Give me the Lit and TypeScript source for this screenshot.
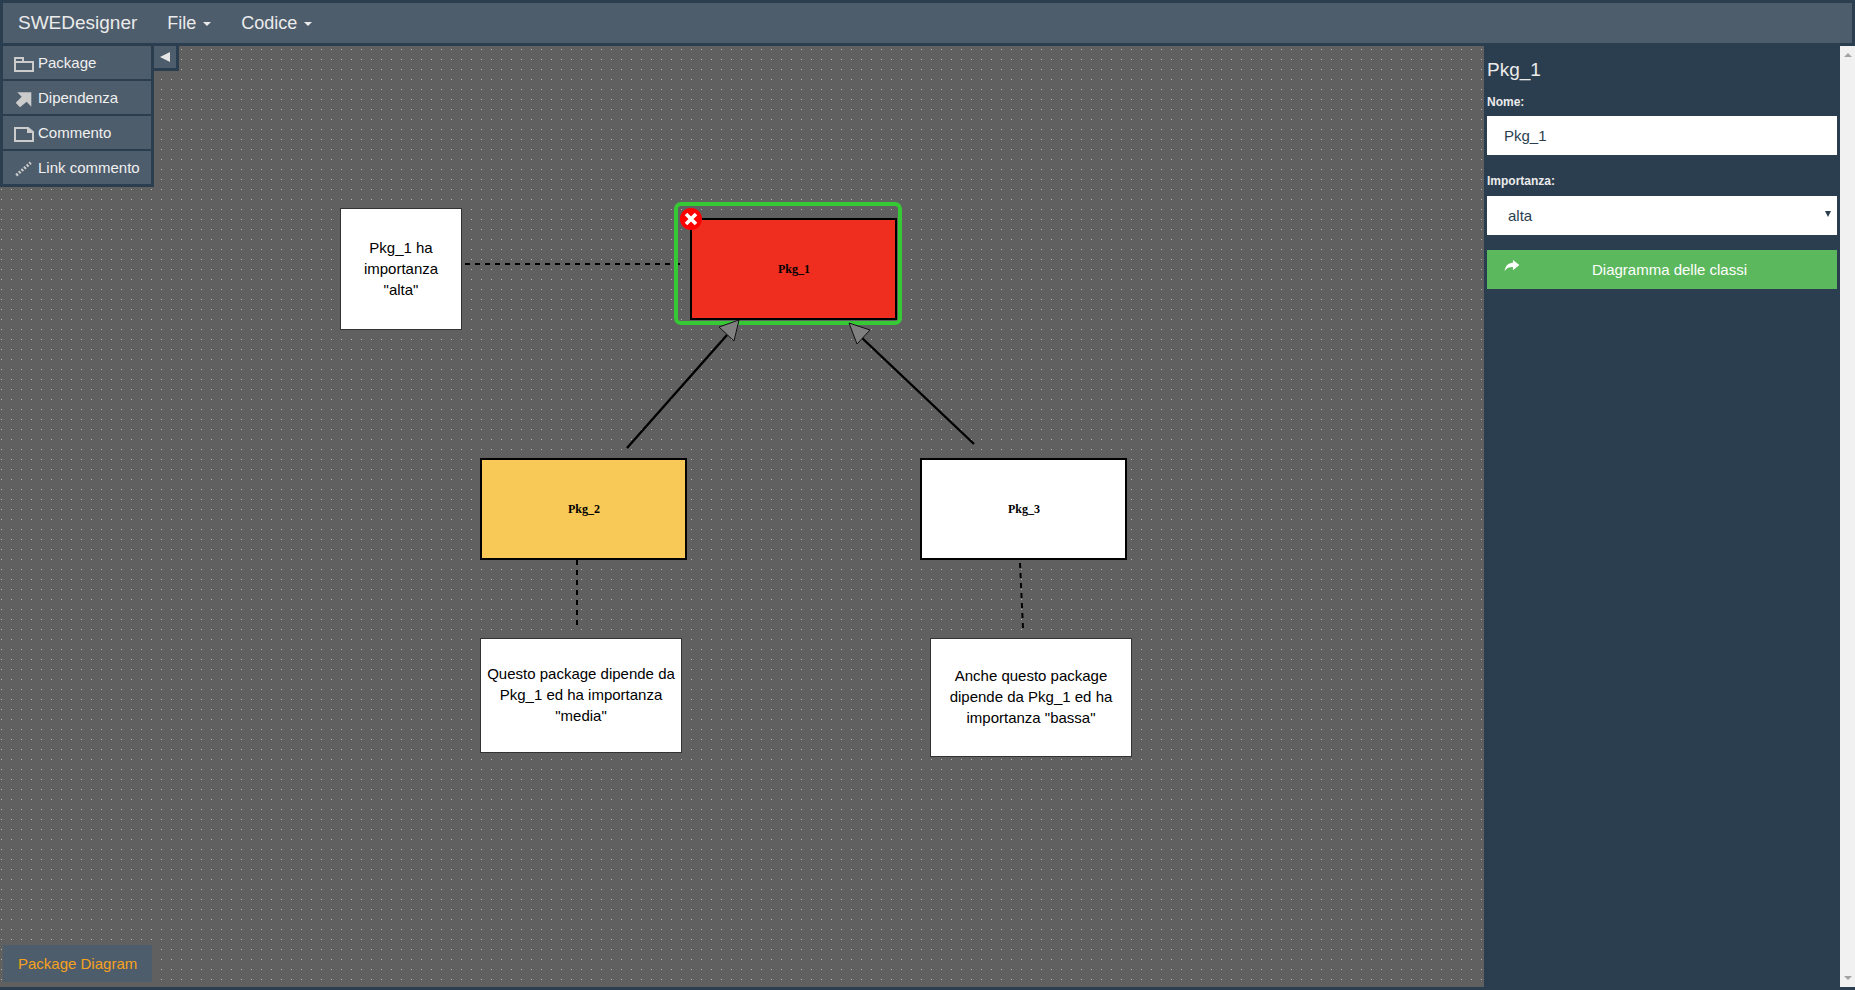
import { LitElement, css, html, svg } from "lit";
import { customElement } from "lit/decorators.js";

interface Pkg { name: string; x: number; y: number; fill: string; }
interface Note { lines: string[]; x: number; y: number; w: number; h: number; }

// canvas starts at y=46, coordinates below are relative to the page
const TOP = 46;

const PACKAGES: Pkg[] = [
  { name: "Pkg_1", x: 691, y: 219, fill: "#ef2e20" },
  { name: "Pkg_2", x: 481, y: 459, fill: "#f8c957" },
  { name: "Pkg_3", x: 921, y: 459, fill: "#ffffff" },
];

const NOTES: Note[] = [
  { lines: ["Pkg_1 ha", "importanza", '"alta"'], x: 340, y: 208, w: 122, h: 122 },
  { lines: ["Questo package dipende da", "Pkg_1 ed ha importanza", '"media"'], x: 480, y: 638, w: 202, h: 115 },
  { lines: ["Anche questo package", "dipende da Pkg_1 ed ha", 'importanza "bassa"'], x: 930, y: 638, w: 202, h: 119 },
];

@customElement("app-root")
export class AppRoot extends LitElement {
  static styles = css`
    :host {
      display: flex;
      flex-direction: column;
      height: 990px;
      overflow: hidden;
      background: #2b3e50;
      font-family: "Liberation Sans", Arial, sans-serif;
      font-size: 15px;
      color: #ebebeb;
    }

    .navbar {
      display: flex;
      align-items: center;
      height: 40px;
      margin: 3px;
      padding-left: 15px;
      background: #4e5d6c;
      flex: none;
    }

    .brand { font-size: 19px; margin-right: 30px; }
    .menu { font-size: 18px; margin-right: 30px; display: flex; align-items: center; }
    .caret {
      display: inline-block;
      margin-left: 7px;
      margin-top: 2px;
      border-top: 4px solid #ebebeb;
      border-left: 4px solid transparent;
      border-right: 4px solid transparent;
    }

    .main { display: flex; height: 941px; flex: none; }

    .canvas {
      position: relative;
      flex: 1;
      background-color: #606060;
      background-image: radial-gradient(circle at 1.5px 3.5px, #b4b4b4 0.7px, transparent 0.7px);
      background-size: 10px 10px;
    }

    .diagram { position: absolute; inset: 0; }

    .tools {
      position: absolute;
      left: 0;
      top: 0;
      width: 154px;
      box-sizing: border-box;
      padding: 0 3px 3px;
      background: #2b3e50;
      display: flex;
      flex-direction: column;
      gap: 2px;
    }

    .tool {
      display: flex;
      align-items: center;
      height: 33px;
      background: #4e5d6c;
      padding-left: 9px;
      gap: 1px;
      color: #f0f0f0;
    }

    .tool svg { width: 25px; height: 25px; flex: none; }

    .toggle {
      position: absolute;
      left: 154px;
      top: 0;
      width: 22px;
      height: 22px;
      background: #4e5d6c;
      border-right: 3px solid #2b3e50;
      border-bottom: 3px solid #2b3e50;
      display: flex;
      align-items: center;
      justify-content: center;
    }

    .toggle i {
      border-right: 10px solid #e6e6e6;
      border-top: 5.5px solid transparent;
      border-bottom: 5.5px solid transparent;
    }

    .tab {
      position: absolute;
      left: 3px;
      bottom: 5px;
      width: 149px;
      height: 37px;
      box-sizing: border-box;
      padding-left: 15px;
      display: flex;
      align-items: center;
      background: #4e5d6c;
      color: #f6a21c;
    }

    .note {
      position: absolute;
      box-sizing: border-box;
      padding-bottom: 2px;
      background: #fff;
      border: 1px solid #333;
      display: flex;
      flex-direction: column;
      align-items: center;
      justify-content: center;
      color: #000;
      line-height: 21px;
      text-align: center;
      white-space: nowrap;
    }

    .side {
      width: 356px;
      flex: none;
      box-sizing: border-box;
      padding: 0 3px;
    }

    h4 { margin: 13px 0 0; font-size: 19px; font-weight: 400; line-height: 21px; }
    label { display: block; font-size: 12px; font-weight: 700; margin: 15px 0 6px; line-height: 15px; }
    label.second { margin: 19px 0 7px; }

    input, .select select {
      display: block;
      box-sizing: border-box;
      width: 100%;
      height: 39px;
      border: 0;
      border-radius: 0;
      background: #fff;
      color: #2b3e50;
      font: 15px "Liberation Sans", Arial, sans-serif;
      padding: 0 17px;
      outline: none;
    }

    .select { position: relative; }
    .select select { appearance: none; padding-left: 21px; }
    .select::after {
      content: "";
      position: absolute;
      right: 6px;
      top: 15px;
      border-top: 6px solid #2b3e50;
      border-left: 3px solid transparent;
      border-right: 3px solid transparent;
    }

    .go {
      position: relative;
      margin-top: 15px;
      height: 39px;
      padding-left: 15px;
      background: #5cb85c;
      color: #fff;
      display: flex;
      align-items: center;
      justify-content: center;
    }

    .go svg { position: absolute; left: 17px; top: 10px; width: 16px; height: 12px; }

    .scroll {
      width: 15px;
      flex: none;
      background: #f1f1f1;
      display: flex;
      flex-direction: column;
      justify-content: space-between;
      align-items: center;
      padding: 7px 0;
      box-sizing: border-box;
    }

    .up { border-bottom: 4px solid #a3a3a3; border-left: 4px solid transparent; border-right: 4px solid transparent; }
    .down { border-top: 4px solid #a3a3a3; border-left: 4px solid transparent; border-right: 4px solid transparent; }

    text.pkg { font: 700 12px "Liberation Serif", "Times New Roman", serif; text-anchor: middle; fill: #000; }
  `;

  private renderDiagram() {
    return svg`
      <svg class="diagram" width="1484" height="941" viewBox="0 ${TOP} 1484 941">
        <g stroke="#000" stroke-width="2" fill="none" stroke-dasharray="5 5">
          <line x1="465" y1="264" x2="680" y2="264" />
          <line x1="577" y1="560" x2="577" y2="625" />
          <line x1="1020" y1="563" x2="1023" y2="628" />
        </g>
        <g stroke="#000" stroke-width="2.400">
          <line x1="627" y1="448" x2="727" y2="335" />
          <line x1="974" y1="444" x2="861" y2="337" />
        </g>
        <rect x="676" y="204" width="224" height="119" rx="5" fill="none" stroke="#35c935" stroke-width="4" />
        ${PACKAGES.map(
          (p) => svg`
            <rect x=${p.x} y=${p.y} width="205" height="100" fill=${p.fill} stroke="#000" stroke-width="2" />
            <text class="pkg" x=${p.x + 103} y=${p.y + 54}>${p.name}</text>
          `,
        )}
        <g fill="#808080" stroke="#111" stroke-width="1">
          <polygon points="739,320 719,327 734,341" />
          <polygon points="849,323 870,330 857,344" />
        </g>
        <circle cx="691" cy="219" r="11" fill="#f00" />
        <path d="M686 214 L696 224 M696 214 L686 224" stroke="#fff" stroke-width="3.600" />
      </svg>
    `;
  }

  render() {
    return html`
      <div class="navbar">
        <span class="brand">SWEDesigner</span>
        <span class="menu">File<i class="caret"></i></span>
        <span class="menu">Codice<i class="caret"></i></span>
      </div>
      <div class="main">
        <div class="canvas">
          ${this.renderDiagram()}
          ${NOTES.map(
            (n) => html`
              <div class="note" style="left:${n.x}px;top:${n.y - TOP}px;width:${n.w}px;height:${n.h}px">
                ${n.lines.map((l) => html`<div>${l}</div>`)}
              </div>
            `,
          )}
          <div class="tools">
            <div class="tool">
              <svg viewBox="0 0 25 25"><path d="M3 8h8v4h10v9H3zM3 12h8" fill="none" stroke="#cccccc" stroke-width="2" shape-rendering="crispEdges" /></svg>
              <span>Package</span>
            </div>
            <div class="tool">
              <svg viewBox="0 0 25 25"><path d="M5.300 7.300h14v14.400l-4.600-5L8 22.300l-4.300-4.600 6-6z" fill="#cccccc" /></svg>
              <span>Dipendenza</span>
            </div>
            <div class="tool">
              <svg viewBox="0 0 25 25"><path d="M3 8h13l5 4v9H3zM16 8v4h5" fill="none" stroke="#cccccc" stroke-width="2" /></svg>
              <span>Commento</span>
            </div>
            <div class="tool">
              <svg viewBox="0 0 25 25"><path d="M4.300 20.300L18.700 7.700" fill="none" stroke="#cccccc" stroke-width="3" stroke-dasharray="2 1.500" /></svg>
              <span>Link commento</span>
            </div>
          </div>
          <div class="toggle"><i></i></div>
          <div class="tab">Package Diagram</div>
        </div>
        <div class="side">
          <h4>Pkg_1</h4>
          <label>Nome:</label>
          <input .value=${"Pkg_1"} />
          <label class="second">Importanza:</label>
          <div class="select">
            <select><option>alta</option><option>media</option><option>bassa</option></select>
          </div>
          <div class="go">
            <svg viewBox="0 0 16 13"><path d="M9 0l7 5.500-7 5.500V7.500C5 7.500 2 8.500 0 12c.5-5 3.500-8.500 9-9z" fill="#fff" /></svg>
            Diagramma delle classi
          </div>
        </div>
        <div class="scroll"><i class="up"></i><i class="down"></i></div>
      </div>
    `;
  }
}
